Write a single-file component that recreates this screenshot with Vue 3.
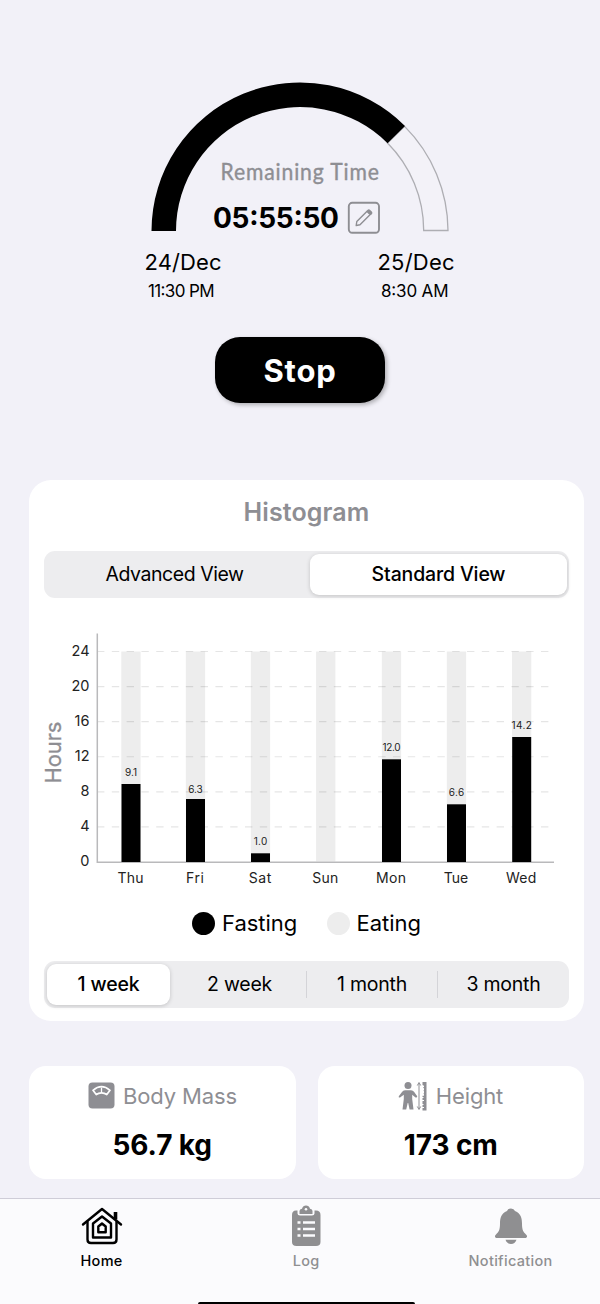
<script setup>
import { ref } from 'vue'

const view = ref('Standard View')
const range = ref('1 week')
const ranges = ['1 week', '2 week', '1 month', '3 month']
const ticks = [24, 20, 16, 12, 8, 4, 0]
const tickY = (v) => 862 - (v * 210.5) / 24
const days = [
  { name: 'Thu', x: 121.5, top: 784, label: '9.1', w: 12, lw: 26 },
  { name: 'Fri', x: 186, top: 799, label: '6.3', w: 14.5, lw: 18 },
  { name: 'Sat', x: 251, top: 853.3, label: '1.0', w: 13.5, lw: 22.5 },
  { name: 'Sun', x: 316.3, top: null, lw: 26 },
  { name: 'Mon', x: 382, top: 759.3, label: '12.0', w: 18, lw: 30 },
  { name: 'Tue', x: 447, top: 804.3, label: '6.6', w: 15.5, lw: 24.5 },
  { name: 'Wed', x: 512.2, top: 737, label: '14.2', w: 20.5, lw: 30.5 },
]
</script>

<template>
  <main class="screen">
    <section class="timer">
      <svg class="gauge" width="600" height="310" viewBox="0 0 600 310">
        <path d="M404.6 126.4A148 148 0 0 1 448 230.5H423.700A124 124 0 0 0 387.500 143Z" fill="#f3f2f8" stroke="#aeaeb3" stroke-width="1.3" />
        <path d="M151.500 231A148.500 148.500 0 0 1 405 126L387.500 143.200A124 124 0 0 0 176 231Z" fill="#000" />
        <text class="caption" transform="translate(220.500 180) scale(.9 1)" textLength="176">Remaining Time</text>
        <text class="clock" x="213" y="227.500" textLength="126">05:55:50</text>
        <g fill="none" stroke="#8e8e93">
          <rect x="348.800" y="202.800" width="30.200" height="30" rx="3.500" stroke-width="1.900" />
          <path d="M356.200 225.500l.6-4 10.500-10.500 3.200 3.200-10.500 10.500z" stroke-width="1.400" stroke-linejoin="round" />
          <path d="M368.800 211.300l1.600 1.600" stroke-width="4" stroke-linecap="round" />
        </g>
        <text class="date" x="144.500" y="269.500" textLength="77">24/Dec</text>
        <text class="date" x="377.500" y="269.500" textLength="77">25/Dec</text>
        <text class="hour" x="148" y="297.300" textLength="66.500">11:30 PM</text>
        <text class="hour" x="381" y="297.300" textLength="67.500">8:30 AM</text>
      </svg>
      <button class="stop">Stop</button>
    </section>

    <section class="card histogram">
      <h2>Histogram</h2>
      <div class="segments views">
        <button :class="{ on: view === 'Advanced View' }" @click="view = 'Advanced View'">Advanced View</button>
        <button :class="{ on: view === 'Standard View' }" @click="view = 'Standard View'">Standard View</button>
      </div>
      <svg class="chart" width="555" height="292" viewBox="29 606 555 292">
        <rect v-for="d in days" :key="d.name" :x="d.x - 0.2" y="651.500" width="19.300" height="210" fill="#ededed" />
        <path v-for="t in ticks.slice(0, 6)" :key="t" :d="`M97 ${tickY(t)}H550.500`" stroke="#000" stroke-opacity=".1" stroke-width="1.200" stroke-dasharray="7.4 7.4" />
        <path d="M97.300 633.500V862.300H554" fill="none" stroke="#b9b9bb" stroke-width="1.500" />
        <text v-for="t in ticks" :key="t" class="tick" x="89.500" :y="tickY(t) + 4.300">{{ t }}</text>
        <template v-for="d in days" :key="d.name">
          <rect v-if="d.top" :x="d.x" :y="d.top" width="19" :height="862 - d.top" fill="#000" />
          <text v-if="d.top" class="value" :x="d.x + 9.500 - d.w / 2" :y="d.top - (d.name === 'Fri' ? 6.500 : 8.500)" :textLength="d.w">{{ d.label }}</text>
          <text class="day" :x="d.x + 9 - d.lw / 2" y="883.300" :textLength="d.lw">{{ d.name }}</text>
        </template>
        <text class="axis" transform="translate(61 783.500) rotate(-90)" textLength="62">Hours</text>
      </svg>
      <div class="legend">
        <span class="dot"></span><span>Fasting</span>
        <span class="dot eat"></span><span>Eating</span>
      </div>
      <div class="segments ranges">
        <button v-for="r in ranges" :key="r" :class="{ on: range === r }" @click="range = r">{{ r }}</button>
      </div>
    </section>

    <section class="stats">
      <article class="card stat">
        <div class="label">
          <svg width="27" height="27" viewBox="0 0 27 27">
            <rect x=".5" y=".5" width="26" height="26" rx="4" fill="#8e8e93" />
            <path d="M5 8.300Q13.500 1 22 8.300L18.800 12.500Q16.500 10.800 13.500 10.800T8.200 12.500Z" fill="none" stroke="#fff" stroke-width="1.700" stroke-linejoin="round" />
            <path d="M13.500 5.500V11" stroke="#fff" stroke-width="1.300" />
          </svg>
          <span>Body Mass</span>
        </div>
        <strong>56.7 kg</strong>
      </article>
      <article class="card stat height">
        <div class="label">
          <svg width="29" height="30" viewBox="0 0 29 30" fill="#8e8e93">
            <circle cx="10" cy="4.500" r="3.500" />
            <path d="M7 9.200H13Q15 9.200 16.200 11L19.200 15.200Q19.300 17 17.500 16.500L14.200 13.800V18L15.500 28.500H11.600L10.200 22H9.700L8.200 28.500H4.500L5.800 18V13.800L2 16.500Q.2 17 .8 15.200L4 11Q5 9.200 7 9.200Z" />
            <path d="M21 2.500V27.500M19.300 4.500L21 1.500L22.700 4.500M19.300 25.500L21 28.500L22.700 25.500" fill="none" stroke="#8e8e93" stroke-width="1" />
            <path d="M24.500 1H28.500V29.500H24.500V27H26V26H24.500V24H25.500V23H24.500V20H26V19H24.500V17H25.500V16H24.500V14.800H26V13.500L25.500 12H26V10.500L25.500 9H26V7.500L25 6H26V4.800L24.500 4Z" />
          </svg>
          <span>Height</span>
        </div>
        <strong>173 cm</strong>
      </article>
    </section>

    <nav class="tabs">
      <a class="tab home">
        <svg width="42" height="42" viewBox="0 0 42 42" fill="none" stroke="#000" stroke-width="2.400" stroke-linejoin="round" stroke-linecap="round">
          <path d="M2 19.500L21 4L40 19.500" />
          <path d="M34.500 14.500V7" stroke-width="3.600" stroke-linecap="butt" />
          <path d="M6.500 17V34.500Q6.500 38 10 38H32Q35.500 38 35.500 34.500V17" />
          <path d="M12 32.500V18.500L21 11.500L30 18.500V32.500Z" />
          <path d="M17.300 27.300V21.500L21 18.500L24.700 21.500V27.300Z" />
        </svg>
        <span>Home</span>
      </a>
      <a class="tab log">
        <svg width="42" height="42" viewBox="0 0 42 42" fill="#8f8f91">
          <path d="M11 5.500H12.500V8.500Q12.500 10.500 15 10.500H27Q29.500 10.500 29.500 8.500V5.500H31Q35.500 5.500 35.500 10V37Q35.500 41 31 41H11.500Q7 41 7 37V10Q7 5.500 11 5.500Z" />
          <path d="M14.500 9V6Q14.500 4 17 3.700Q18 .5 21 .5T25 3.700Q27.500 4 27.500 6V9Z" />
          <circle cx="21" cy="4.200" r="1.300" fill="#fbfbfd" />
          <path d="M12.500 17.500H15.500M18 17.500H30M12.500 24H15.500M18 24H30M12.500 30.500H15.500M18 30.500H30" stroke="#fbfbfd" stroke-width="2.500" />
        </svg>
        <span>Log</span>
      </a>
      <a class="tab bell">
        <svg width="42" height="42" viewBox="0 0 42 42" fill="#8f8f91">
          <path d="M21 3.500Q24 3.500 25 6C31 8.500 32 13.500 32 18.500C32 25.500 33.500 27 36 29.500C38 31.500 37 33 35 33H7C5 33 4 31.500 6 29.500C8.500 27 10 25.500 10 18.500C10 13.500 11 8.500 17 6Q18 3.500 21 3.500Z" />
          <path d="M15.500 34.800H26.500Q25 39 21 39T15.500 34.800Z" />
        </svg>
        <span>Notification</span>
      </a>
      <i class="indicator"></i>
    </nav>
  </main>
</template>

<style>
body { background: #f2f1f8; }
</style>

<style scoped>
.screen { width: 600px; height: 1304px; overflow: hidden; background: #f2f1f8; color: #000; font-family: Inter, sans-serif; display: flex; flex-direction: column; }
.timer { height: 480px; flex: none; display: flex; flex-direction: column; align-items: center; }
.gauge { display: block; }
.caption { font: 400 23.5px Lato, sans-serif; fill: #8e8e93; stroke: #8e8e93; stroke-width: .4px; }
.clock { font-size: 28px; font-weight: 650; }
.date { font-size: 22px; }
.hour { font-size: 17px; }
button { font-family: inherit; border: 0; padding: 0; color: #000; }
.stop { margin-top: 27px; width: 170px; height: 66px; border-radius: 25px; background: #000; color: #fff; font-size: 31px; font-weight: 650; letter-spacing: .8px; box-shadow: 2px 2px 4px rgba(0, 0, 0, .28); }
.card { background: #fff; border-radius: 22px; }
.histogram { margin-left: 29px; width: 555px; height: 541px; flex: none; display: flex; flex-direction: column; }
h2 { margin: 0; height: 70.500px; line-height: 64px; text-align: center; font-size: 25px; font-weight: 600; color: #8e8e93; letter-spacing: .1px; }
.segments { margin: 0 15px; width: 525px; height: 47.500px; box-sizing: border-box; padding: 3px; border-radius: 11px; background: #ededef; display: grid; flex: none; }
.segments button { background: transparent; font-size: 19.500px; letter-spacing: -.25px; border-radius: 9px; }
.segments .on { background: #fff; font-weight: 550; letter-spacing: -.15px; box-shadow: 0 1px 4px rgba(0, 0, 0, .18); }
.views { grid-template-columns: 263px 257px; }
.views button:first-child { padding-right: 8px; }
.views button:first-child { letter-spacing: -.45px; }
.ranges { grid-template-columns: 123px 136px 131px 129px; }
.ranges button + button { margin: 7px 0; border-radius: 0; }
.ranges button:nth-child(n + 3) { border-left: 1px solid #d4d4d8; }
.ranges button:nth-child(2) { padding-left: 3px; }
.ranges button:last-child { padding-left: 3px; }
.chart { display: block; height: 292px; flex: none; margin-top: 8px; }
.tick { font-size: 14.500px; text-anchor: end; fill: #222; }
.day { font-size: 14px; fill: #222; }
.value { font-size: 10px; fill: #222; }
.axis { font-size: 22px; fill: #8e8e93; stroke: #8e8e93; stroke-width: .3px; }
.legend { height: 50px; margin-bottom: 12.500px; display: flex; align-items: center; padding-left: 163px; font-size: 22px; letter-spacing: -.05px; }
.dot { width: 23px; height: 23px; border-radius: 50%; background: #000; margin-right: 7px; }
.eat { background: #ededed; margin-left: 30px; margin-right: 6.500px; }
.stats { display: flex; gap: 22px; margin: 45px 16px 0 29px; }
.stat { flex: 1; height: 113px; border-radius: 17px; display: flex; flex-direction: column; align-items: center; }
.label { height: 59px; display: flex; align-items: center; gap: 8.500px; font-size: 22px; letter-spacing: -.15px; color: #8e8e93; }
.stat strong { font-size: 28px; line-height: 40px; font-weight: 650; letter-spacing: -.1px; }
.tabs { margin-top: 19px; height: 105px; border-top: 1px solid #cfcdd8; background: #fbfbfd; display: flex; position: relative; }
.tab { width: 204.500px; flex: none; display: flex; flex-direction: column; align-items: center; color: #8f8f91; font-size: 14.500px; font-weight: 550; letter-spacing: .3px; position: relative; left: -.7px; }
.tab svg { margin-top: 6px; }
.tab span { margin-top: 5px; line-height: 18px; }
.home { color: #000; }
.indicator { position: absolute; left: 198px; bottom: 0; width: 217px; height: 2px; background: #000; border-radius: 2px 2px 0 0; }
</style>
